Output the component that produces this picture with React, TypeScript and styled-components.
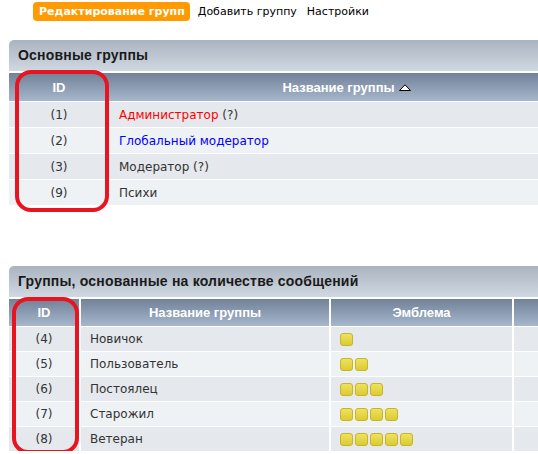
import React from "react";
import styled, { createGlobalStyle } from "styled-components";

const Global = createGlobalStyle`
  html, body { margin: 0; padding: 0; background: #fff; overflow: hidden; }
  body { font-family: "DejaVu Sans", Verdana, sans-serif; }
`;

const Page = styled.div`
  width: 575px;
  padding: 2px 0 0 9px;
`;

const Nav = styled.div`
  display: flex;
  align-items: center;
  gap: 8px;
  margin-left: 24px;
  height: 19px;
`;

const NavActive = styled.span`
  background: #ff9a00;
  color: #fff;
  font-weight: bold;
  font-size: 11px;
  height: 19px;
  line-height: 19px;
  padding: 0 5px 0 6px;
  border-radius: 4px;
`;

const NavLink = styled.span<{ $gap?: number }>`
  font-size: 11px;
  line-height: 19px;
  color: #000;
  margin-left: ${(p) => p.$gap ?? 0}px;
`;

const Section = styled.section<{ $top: number }>`
  position: relative;
  margin-top: ${(p) => p.$top}px;
`;

const SectionHead = styled.div`
  height: 31px;
  line-height: 31px;
  padding-left: 9px;
  border-radius: 5px 0 0 0;
  background: linear-gradient(#aab4bf, #d0d8e1);
  font-family: "Liberation Sans", Arial, sans-serif;
  font-weight: bold;
  font-size: 14px;
  letter-spacing: 0.2px;
  color: #1a1a1a;
  margin-bottom: 2px;
`;

const Table = styled.table`
  width: 100%;
  border-collapse: collapse;
  table-layout: fixed;
`;

const Th = styled.th<{ $w?: number; $sep?: boolean; $h: number }>`
  ${(p) => (p.$w ? `width: ${p.$w}px;` : "")}
  height: ${(p) => p.$h}px;
  padding: 0;
  background: linear-gradient(#718299, #a6b6cb);
  color: #fff;
  font-family: "Liberation Sans", Arial, sans-serif;
  font-weight: bold;
  font-size: 13px;
  text-align: center;
  border-left: ${(p) => (p.$sep ? "2px solid #fff" : "0")};
`;

const Tr = styled.tr<{ $alt: boolean }>`
  background: ${(p) => (p.$alt ? "#eef2f5" : "#e5e8ec")};
`;

const Td = styled.td<{ $center?: boolean; $pad?: number; $sep?: boolean; $h: number }>`
  height: ${(p) => p.$h}px;
  border-top: 1px solid #fff;
  border-left: ${(p) => (p.$sep ? "2px solid #fff" : "0")};
  padding: 0 0 0 ${(p) => p.$pad ?? 0}px;
  font-size: 12px;
  color: #333;
  text-align: ${(p) => (p.$center ? "center" : "left")};
  white-space: nowrap;
`;

const GroupName = styled.span<{ $color?: string }>`
  color: ${(p) => p.$color ?? "#333"};
`;

const Arrow = styled.svg`
  margin-left: 4px;
  vertical-align: 1px;
`;

const Pips = styled.div`
  display: flex;
  gap: 2px;
`;

const Pip = styled.span`
  width: 11px;
  height: 11px;
  border: 1px solid #c7b52a;
  border-radius: 3px;
  background: linear-gradient(#eee25e, #dccb32);
`;

const Mark = styled.div<{ $l: number; $t: number; $w: number; $h: number }>`
  position: absolute;
  left: ${(p) => p.$l}px;
  top: ${(p) => p.$t}px;
  width: ${(p) => p.$w}px;
  height: ${(p) => p.$h}px;
  border: 4px solid #e8141f;
  border-radius: 16px;
  box-sizing: border-box;
  pointer-events: none;
`;

const main = [
  { id: 1, name: "Администратор", color: "#ff0000", q: true },
  { id: 2, name: "Глобальный модератор", color: "#0000ff", q: false },
  { id: 3, name: "Модератор", color: undefined, q: true },
  { id: 9, name: "Психи", color: undefined, q: false },
];

const ranked = [
  { id: 4, name: "Новичок", n: 1 },
  { id: 5, name: "Пользователь", n: 2 },
  { id: 6, name: "Постоялец", n: 3 },
  { id: 7, name: "Старожил", n: 4 },
  { id: 8, name: "Ветеран", n: 5 },
];

export default function App() {
  return (
    <Page>
      <Global />
      <Nav>
        <NavActive>Редактирование групп</NavActive>
        <NavLink>Добавить группу</NavLink>
        <NavLink $gap={2}>Настройки</NavLink>
      </Nav>

      <Section $top={19}>
        <SectionHead>Основные группы</SectionHead>
        <Table>
          <thead>
            <tr>
              <Th $w={100} $h={28}>ID</Th>
              <Th $h={28}>
                Название группы
                <Arrow width="12" height="7" viewBox="0 0 12 7">
                  <path d="M0.5 6.5 L6 0.8 L11.5 6.5 Z" fill="#fff" stroke="#000" strokeWidth="1" />
                </Arrow>
              </Th>
            </tr>
          </thead>
          <tbody>
            {main.map((g, i) => (
              <Tr key={g.id} $alt={i % 2 === 1}>
                <Td $center $h={25}>({g.id})</Td>
                <Td $pad={10} $h={25}>
                  <GroupName $color={g.color}>{g.name}</GroupName>
                  {g.q ? " (?)" : ""}
                </Td>
              </Tr>
            ))}
          </tbody>
        </Table>
        <Mark $l={6} $t={30} $w={94} $h={142} />
      </Section>

      <Section $top={61}>
        <SectionHead>Группы, основанные на количестве сообщений</SectionHead>
        <Table>
          <thead>
            <tr>
              <Th $w={70} $h={27}>ID</Th>
              <Th $w={248} $sep $h={27}>Название группы</Th>
              <Th $w={181} $sep $h={27}>Эмблема</Th>
              <Th $sep $h={27}></Th>
            </tr>
          </thead>
          <tbody>
            {ranked.map((g, i) => (
              <Tr key={g.id} $alt={i % 2 === 1}>
                <Td $center $h={24}>({g.id})</Td>
                <Td $pad={9} $sep $h={24}>{g.name}</Td>
                <Td $pad={9} $sep $h={24}>
                  <Pips>
                    {Array.from({ length: g.n }).map((_, k) => (
                      <Pip key={k} />
                    ))}
                  </Pips>
                </Td>
                <Td $sep $h={24}></Td>
              </Tr>
            ))}
          </tbody>
        </Table>
        <Mark $l={3} $t={31} $w={67} $h={157} />
      </Section>
    </Page>
  );
}
